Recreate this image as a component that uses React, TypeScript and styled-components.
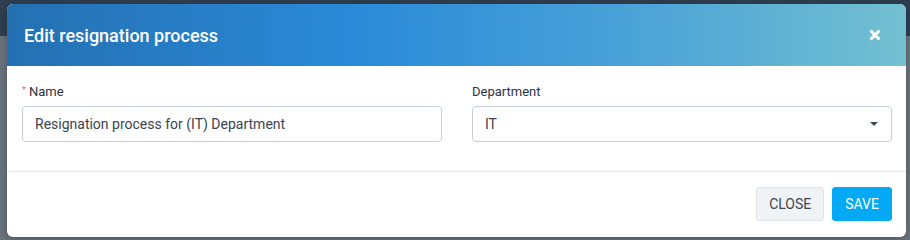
import React from 'react';
import styled, { createGlobalStyle } from 'styled-components';

const GlobalStyle = createGlobalStyle`
  html, body {
    margin: 0;
    padding: 0;
  }
  body {
    width: 910px;
    height: 240px;
    overflow: hidden;
    font-family: Roboto, "Liberation Sans", sans-serif;
    background: linear-gradient(180deg, #2f3f51 0px, #2f3f51 36px, #6a747e 36px, #6a747e 100%);
  }
`;

const Backdrop = styled.div`
  width: 910px;
  height: 240px;
  padding: 4px 0 0 7px;
  box-sizing: border-box;
`;

const Modal = styled.div`
  width: 899px;
  height: 233px;
  background: #ffffff;
  border-radius: 6px;
  overflow: hidden;
  display: flex;
  flex-direction: column;
  box-shadow: 0 2px 10px rgba(0, 0, 0, 0.25);
`;

const Header = styled.div`
  height: 62px;
  flex: none;
  display: flex;
  align-items: center;
  justify-content: space-between;
  padding: 0 24px 0 17px;
  background: linear-gradient(90deg, #2470b2 0%, #2a8ad7 38%, #48a1d7 68%, #73c0d1 100%);
  color: #ffffff;
`;

const Title = styled.h2`
  margin: 0;
  font-size: 18px;
  font-weight: 500;
`;

const CloseIcon = styled.button`
  border: 0;
  padding: 0;
  background: none;
  width: 14px;
  height: 14px;
  display: flex;
  cursor: pointer;
`;

const Body = styled.div`
  height: 106px;
  flex: none;
  display: grid;
  grid-template-columns: 420px 420px;
  column-gap: 30px;
  padding: 16px 14px 0 15px;
  box-sizing: border-box;
  border-bottom: 1px solid #e3e7ec;
`;

const Field = styled.div`
  display: flex;
  flex-direction: column;
`;

const Label = styled.label`
  height: 18px;
  margin-bottom: 6px;
  display: flex;
  align-items: center;
  font-size: 13px;
  color: #2c3440;
`;

const Required = styled.span`
  color: #f0616f;
  font-size: 9px;
  margin-right: 3px;
  align-self: flex-start;
  margin-top: 3px;
`;

const Control = styled.div<{ $select?: boolean }>`
  height: 36px;
  box-sizing: border-box;
  border: 1px solid #c4cedb;
  border-radius: 4px;
  display: flex;
  align-items: center;
  justify-content: space-between;
  padding: 0 ${(p) => (p.$select ? '13px' : '12px')} 0 12px;
  font-size: 14px;
  color: #3a4453;
`;

const Caret = styled.span`
  width: 0;
  height: 0;
  border-left: 4px solid transparent;
  border-right: 4px solid transparent;
  border-top: 4px solid #3f4856;
`;

const Footer = styled.div`
  flex: 1;
  display: flex;
  justify-content: flex-end;
  align-items: flex-start;
  gap: 8px;
  padding: 15px 14px 0 0;
`;

const Button = styled.button<{ $primary?: boolean }>`
  height: 34px;
  box-sizing: border-box;
  padding: 0 12px;
  border-radius: 3px;
  font-family: Roboto, "Liberation Sans", sans-serif;
  font-size: 14px;
  text-transform: uppercase;
  cursor: pointer;
  border: 1px solid ${(p) => (p.$primary ? '#03a9f4' : '#dfe4ea')};
  background: ${(p) => (p.$primary ? '#03a9f4' : '#f0f3f6')};
  color: ${(p) => (p.$primary ? '#ffffff' : '#3c4655')};
`;

export default function App() {
  return (
    <>
      <GlobalStyle />
      <Backdrop>
        <Modal>
          <Header>
            <Title>Edit resignation process</Title>
            <CloseIcon aria-label="Close">
              <svg width="14" height="14" viewBox="0 0 14 14">
                <path d="M2.5 2.5 L11.5 11.5 M11.5 2.5 L2.5 11.5" stroke="#ffffff" strokeWidth="3" strokeLinecap="butt" />
              </svg>
            </CloseIcon>
          </Header>
          <Body>
            <Field>
              <Label>
                <Required>*</Required>Name
              </Label>
              <Control>Resignation process for (IT) Department</Control>
            </Field>
            <Field>
              <Label>Department</Label>
              <Control $select>
                IT
                <Caret />
              </Control>
            </Field>
          </Body>
          <Footer>
            <Button>Close</Button>
            <Button $primary>Save</Button>
          </Footer>
        </Modal>
      </Backdrop>
    </>
  );
}
